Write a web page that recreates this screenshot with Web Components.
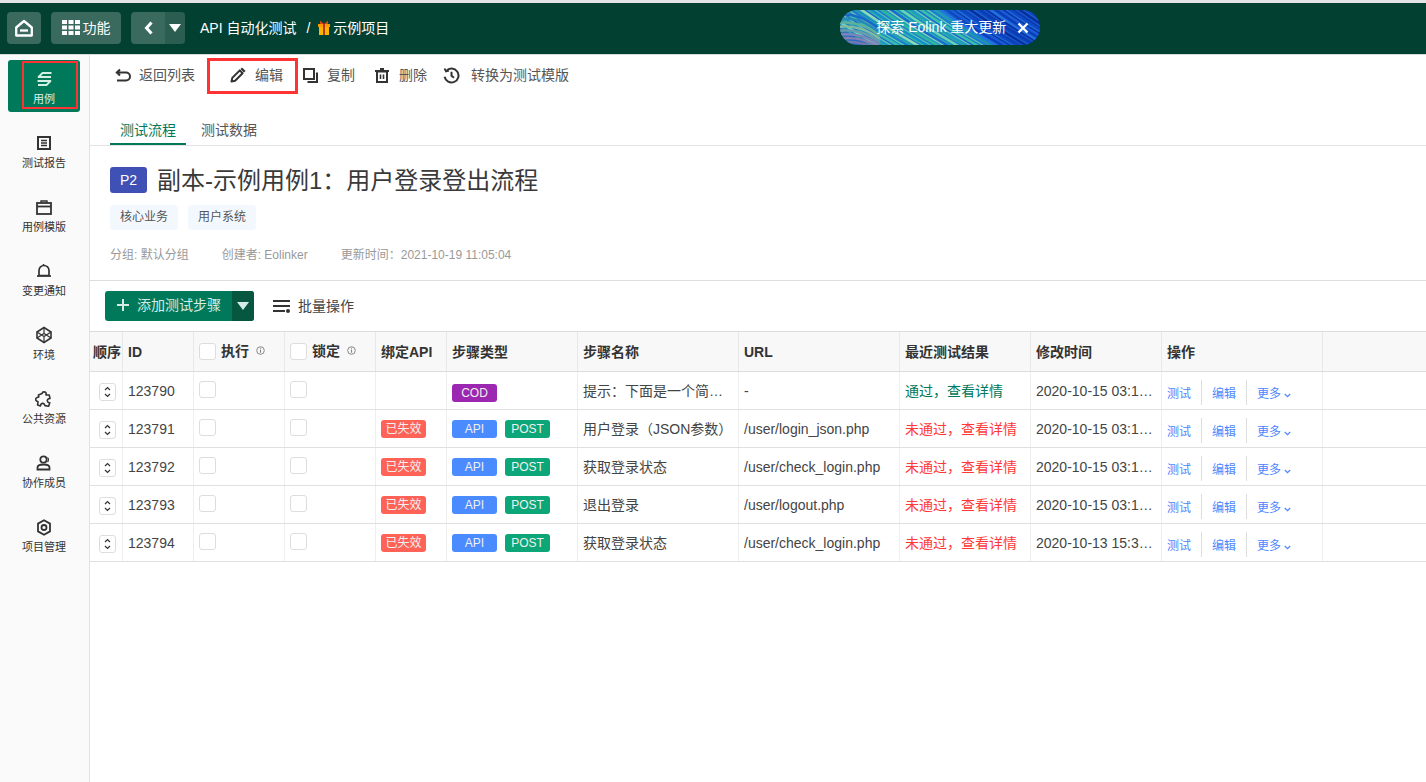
<!DOCTYPE html>
<html lang="zh-CN"><head><meta charset="utf-8"><title>Eolink</title>
<style>
html,body{margin:0;height:100%;background:#fff}
body{font:14px/20px "Liberation Sans","Noto Sans CJK SC",sans-serif;color:#333}
</style></head>
<body>
<app-shell>
  <app-header slot="header"></app-header>
  <side-nav slot="nav"></side-nav>
  <case-toolbar></case-toolbar>
  <case-tabs></case-tabs>
  <case-summary></case-summary>
  <step-actions></step-actions>
  <step-table></step-table>
</app-shell>
<script>
const ic=(w,h,body,extra='')=>`<svg width="${w}" height="${h}" viewBox="0 0 ${w} ${h}" fill="none" stroke="currentColor" stroke-width="2" ${extra}>${body}</svg>`;
function def(name,css,html,init){
  customElements.define(name,class extends HTMLElement{
    connectedCallback(){
      if(this.shadowRoot)return;
      const r=this.attachShadow({mode:'open'});
      r.innerHTML=`<style>${css}</style>`+(typeof html==='function'?html(this):html);
      if(init)init(r,this);
    }
  });
}
def('app-shell',`
:host{display:grid;grid-template-columns:90px 1fr;grid-template-rows:55px 1fr;height:782px;overflow:hidden;width:1426px}
.h{grid-column:1/3}
.n{min-height:0}
main{min-width:0;display:flex;flex-direction:column}
`,`<div class="h"><slot name="header"></slot></div><div class="n"><slot name="nav"></slot></div><main><slot></slot></main>`);

def('hd-btn',`
:host{display:flex;align-items:center;justify-content:center;gap:3px;height:32px;background:#3a6a5e;border-radius:4px;color:#fff;font-size:14px;line-height:32px}
`,`<slot></slot>`);

def('promo-pill',`
:host{display:flex;align-items:center;position:relative;width:200px;height:35px;border-radius:18px;overflow:hidden;color:#fff;font-size:14px;background:linear-gradient(90deg,#3d78b4 0,#1560c8 14%,#22a0b0 34%,#1878c8 54%,#0c44b8 72%,#0a36a4 100%)}
svg.bg{position:absolute;left:0;top:0}
span{position:relative;margin-left:36px;width:130px;white-space:nowrap;line-height:35px}
svg.x{position:relative;margin-left:11px}
`,()=>{
  let s='';
  const mid=['#3cc0a8','#1c9cc0','#6ed4b0','#1a6ad0','#2fb8a0','#1290c8','#8fdcb8','#1e7ed0'];
  const rt=['#0c3cb4','#1a5cd8','#08309c','#2470e0','#0e48c4'];
  for(let i=0;i<70;i++){
    const x=i*3.3-30;const c=x<95?mid[i*5%8]:rt[i%5];
    s+=`<path d="M${x} -4 C ${x+14} 6, ${x+34} 20, ${x+70} 40" stroke="${c}" stroke-width="${1.4+(i%3)*.7}" opacity="${.7+(i%3)*.14}" fill="none"/>`;
  }
  const lf=['#1a68c8','#2a88b8','#5fb09c','#84b8a0','#6a9cb0','#7c84bc','#8a80b4','#7078b0'];
  for(let i=0;i<8;i++){
    s+=`<path d="M-2 ${5+i*4} C 10 ${3+i*4}, 26 ${7+i*3.6}, 40 ${20+i*3}" stroke="${lf[i]}" stroke-width="2.400" fill="none"/>`;
  }
  return `<svg class="bg" width="200" height="35" viewBox="0 0 200 35">${s}</svg><span>探索 Eolink 重大更新</span>${ic(12,12,'<path d="M1.500 1.500l9 9M10.500 1.500l-9 9" stroke-width="2.400"/>','class="x"')}`;
});

def('app-header',`
:host{display:flex;align-items:center;box-sizing:border-box;height:55px;background:#024032;border-top:3px solid #e4e4e4;border-bottom:1px solid #d8d8d8;color:#fff;padding:0 0 2px 7px;position:relative}
.home{width:34px}.fn{width:70px;margin-left:10px}
.back{width:34px;margin-left:10px;border-radius:4px 0 0 4px}
.drop{width:20px;background:#2b5d50;border-radius:0 4px 4px 0}
.crumb{margin-left:15px;display:flex;align-items:center;white-space:nowrap;font-size:14px}
.sep{margin:0 8px 0 10px}
.gift{margin-right:3px}
promo-pill{margin-left:451px}
`,`
<hd-btn class="home">${ic(20,18,'<path d="M10 2L2.200 8.500V16.500h15.600V8.500z" stroke-width="2.300" stroke-linejoin="round"/><path d="M6 11.500h8" stroke-width="2.300"/>')}</hd-btn>
<hd-btn class="fn"><svg width="18" height="15" viewBox="0 0 18 15" fill="#fff"><rect width="5" height="4"/><rect x="6.500" width="5" height="4"/><rect x="13" width="5" height="4"/><rect y="5.500" width="5" height="4"/><rect x="6.500" y="5.500" width="5" height="4"/><rect x="13" y="5.500" width="5" height="4"/><rect y="11" width="5" height="4"/><rect x="6.500" y="11" width="5" height="4"/><rect x="13" y="11" width="5" height="4"/></svg>功能</hd-btn>
<hd-btn class="back">${ic(9,14,'<path d="M7.500 1.500L2.500 7l5 5.500" stroke-width="3"/>')}</hd-btn>
<hd-btn class="drop"><svg width="12" height="8" viewBox="0 0 12 8" fill="#fff"><path d="M0 0h12L6 8z"/></svg></hd-btn>
<div class="crumb">API 自动化测试<span class="sep">/</span><svg class="gift" width="12" height="15" viewBox="0 0 12 15"><path d="M0 4h12v3H0z" fill="#ff9800"/><path d="M1 7h10v8H1z" fill="#ffb300"/><path d="M5 4h2v11H5z" fill="#b23a20"/><path d="M2 .5l4 3.500 4-3.500V4H2z" fill="#d84315"/></svg>示例项目</div>
<promo-pill></promo-pill>
`);

def('nav-item',`
:host{display:flex;flex-direction:column;align-items:center;width:72px;height:52px;margin:0 0 12px 8px;border-radius:3px;color:#333;position:relative;box-sizing:border-box;padding-top:10px}
:host([active]){background:#00795a;color:#d8efe6}
.i{height:18px;display:flex;align-items:center;justify-content:center;color:#333}
:host([active]) .i{color:#d4eee4}
.t{font-size:11px;line-height:14px;margin-top:4px;white-space:nowrap}
.mark{display:none;position:absolute;left:14px;right:2px;top:1px;bottom:3px;border:2px solid #f33;pointer-events:none}
:host([active]) .mark{display:block}
`,h=>`<div class="i"><slot></slot></div><div class="t">${h.getAttribute('label')}</div><div class="mark"></div>`);

def('side-nav',`
:host{display:block;box-sizing:border-box;width:90px;height:100%;background:#fafafa;border-right:1px solid #e2e2e2;padding-top:5px}
`,`
<nav-item active label="用例">${ic(17,16,'<path d="M15.500 2H6.500L2.500 6H15" stroke-width="1.800" stroke-linejoin="round"/><path d="M1.500 10H14.500L10.500 14H2" stroke-width="1.800" stroke-linejoin="round"/>')}</nav-item>
<nav-item label="测试报告">${ic(14,14,'<rect x="1" y="1" width="12" height="12" stroke-width="2"/><path d="M4 4.500h6M4 7h6M4 9.500h6" stroke-width="1.300"/>')}</nav-item>
<nav-item label="用例模版">${ic(16,15,'<rect x="1" y="3" width="14" height="11" stroke-width="1.800"/><path d="M1 6.500h14" stroke-width="1.800"/><path d="M5 3V1h6v2" stroke-width="1.400"/>')}</nav-item>
<nav-item label="变更通知">${ic(16,16,'<path d="M3 12.500V7.500a5 5 0 0 1 10 0v5z" stroke-width="1.700"/><path d="M1 13h14" stroke-width="1.700"/><path d="M7.500 1v2" stroke-width="1.500"/>')}</nav-item>
<nav-item label="环境">${ic(18,18,'<path d="M9 1.500l7 4.500v6l-7 4.500L2 12V6z" stroke-width="1.600"/><path d="M2 6l7 4.500L16 6M2 12l7-4.500 7 4.500M9 1.500v6M9 10.500v6" stroke-width="1.200"/>')}</nav-item>
<nav-item label="公共资源">${ic(18,18,'<path d="M7 3.500a2.200 2.200 0 0 1 4.200-.2L11 5h3.200l.8 3.400-1.400.4a2 2 0 0 0 .2 3.800l1 .2-1.200 3.400-3.600-.6-.6-1.200a2 2 0 0 0-3.600.2L5.400 16 2.600 15l.4-3.200-1.400-.8a2 2 0 0 1 .6-3.600L3.800 7 3.400 5z" stroke-width="1.600" stroke-linejoin="round"/>')}</nav-item>
<nav-item label="协作成员">${ic(16,16,'<circle cx="7.500" cy="4.500" r="3.200" stroke-width="1.800"/><path d="M1.500 14.500v-2c0-2 2-3 6-3s6 1 6 3v2z" stroke-width="1.800"/><path d="M11.500 2.500a3 3 0 0 1 0 4.500" stroke-width="1.100"/>')}</nav-item>
<nav-item label="项目管理">${ic(16,17,'<path d="M8 1.200l6 3.400v7.800l-6 3.400-6-3.400V4.600z" stroke-width="1.800"/><circle cx="8" cy="8.500" r="2.500" stroke-width="1.800"/>')}</nav-item>
`);

def('tool-action',`
:host{display:flex;align-items:center;white-space:nowrap;font-size:14px;line-height:20px;color:#555;position:relative}
.i{display:flex;align-items:center;justify-content:center;color:#333;margin-right:var(--g,8px)}
`,`<span class="i"><slot name="i"></slot></span><slot></slot>`);

def('case-toolbar',`
:host{display:flex;align-items:center;box-sizing:border-box;height:42px;padding:0 0 2px 25px}
.edit{position:relative;margin-left:35px;--g:9px}
.mark{position:absolute;left:-23px;top:-7px;width:85px;height:30px;border:3px solid #f33;box-sizing:content-box;pointer-events:none}
.copy{margin-left:20px;--g:9px}.del{margin-left:20px;--g:10px}.his{margin-left:16px;--g:11px}
`,`
<tool-action>${ic(16,14,'<path d="M5 1.500L1.800 4.500 5 7.500M2 4.500h9a3.500 3.500 0 0 1 0 8H2" stroke-width="2"/>','slot="i"')}返回列表</tool-action>
<tool-action class="edit">${ic(16,16,'<path d="M1.500 14.500l.8-3.600 7.500-7.500 2.800 2.800-7.500 7.500z" stroke-width="2" stroke-linejoin="round"/><path d="M11.300 1.200l3.500 3.500" stroke-width="2.200"/>','slot="i"')}编辑<div class="mark"></div></tool-action>
<tool-action class="copy">${ic(15,15,'<rect x="1" y="1" width="10" height="10" stroke-width="2"/><path d="M4.500 14h9.500V4.500" stroke-width="2"/>','slot="i"')}复制</tool-action>
<tool-action class="del">${ic(14,15,'<path d="M0 3h14M5 1h4" stroke-width="2"/><rect x="2" y="3.500" width="10" height="10.500" stroke-width="2"/><path d="M5.500 6.500v4.500M8.500 6.500v4.500" stroke-width="1.600"/>','slot="i"')}删除</tool-action>
<tool-action class="his">${ic(17,17,'<path d="M3.300 3.800a7 7 0 1 1-1.700 6" stroke-width="2"/><path d="M1.500 1.500l1.500 3 3-.8" stroke-width="1.700"/><path d="M8.500 4.800v4l2.500 2" stroke-width="2"/>','slot="i"')}转换为测试模版</tool-action>
`);

def('case-tabs',`
:host{display:flex;height:49px;box-sizing:border-box;padding:23px 0 0 20px;border-bottom:1px solid #e2e2e2}
div{width:76px;height:25px;box-sizing:border-box;text-align:center;line-height:20px;font-size:14px;color:#555;margin-right:5px}
.on{color:#00795a;border-bottom:2px solid #00795a}
`,`<div class="on">测试流程</div><div>测试数据</div>`);

def('case-summary',`
:host{display:block;box-sizing:border-box;height:135px;padding:21px 0 0 20px;border-bottom:1px solid #ddd}
.t{display:flex;align-items:center;height:26px}
.p{width:37px;height:26px;line-height:26px;border-radius:3px;background:#3f51b5;color:#fff;text-align:center;font-size:14px;margin-right:10px}
h1{margin:2px 0 0;font-weight:400;font-size:24px;line-height:28px;color:#3a3a3a;white-space:nowrap}
.tags{display:flex;gap:10px;margin-top:12px}
.tags span{height:25px;line-height:25px;padding:0 10px;background:#f3f8ff;border-radius:3px;font-size:12px;color:#555}
.m{display:flex;gap:33px;margin-top:15px;font-size:12px;line-height:20px;color:#999;white-space:nowrap}
`,`
<div class="t"><div class="p">P2</div><h1>副本-示例用例1：用户登录登出流程</h1></div>
<div class="tags"><span>核心业务</span><span>用户系统</span></div>
<div class="m"><span>分组: 默认分组</span><span>创建者: Eolinker</span><span>更新时间：2021-10-19 11:05:04</span></div>
`);

def('step-actions',`
:host{display:flex;align-items:center;height:50px;box-sizing:border-box;padding:0 0 0 15px}
.b{display:flex;height:30px;width:149px;border-radius:3px;overflow:hidden;color:#d4ece4;background:#00795a}
.a{width:127px;display:flex;align-items:center;padding:0 0 2px 12px;box-sizing:border-box;font-size:14px;white-space:nowrap}
.a svg{margin-right:8px}
.d{width:22px;background:#07563f;display:flex;align-items:center;justify-content:center}
.bat{display:flex;align-items:center;margin-left:19px;font-size:14px;color:#444}
.bat svg{margin-right:8px;color:#333}
`,`
<div class="b"><div class="a">${ic(12,12,'<path d="M6 0v12M0 6h12" stroke-width="2"/>')}添加测试步骤</div><div class="d"><svg width="12" height="8" viewBox="0 0 12 8" fill="#d4ece4"><path d="M0 0h12L6 8z"/></svg></div></div>
<div class="bat"><svg width="17" height="13" viewBox="0 0 17 13" fill="currentColor"><rect width="17" height="2"/><rect y="5" width="17" height="2"/><rect y="10" width="12" height="2"/><circle cx="15" cy="11" r="2"/></svg>批量操作</div>
`);

def('check-box',`
:host{display:block;width:17px;height:17px;box-sizing:border-box;border:1px solid #ddd;border-radius:3px;background:#fff;flex:none}
`,``);

def('step-tag',`
:host{display:inline-block;width:45px;height:18px;line-height:18px;text-align:center;border-radius:3px;color:#f0f0f0;font-size:12px;background:var(--c)}
`,`<slot></slot>`);

def('info-dot',`
:host{display:inline-flex;color:#888}
`,ic(9,9,'<circle cx="4.500" cy="4.500" r="3.800" stroke-width="1"/><path d="M4.500 3.500v3.200M4.500 1.800v1" stroke-width="1.100"/>'));

def('step-table',`
:host{display:block;font-size:14px;color:#444;border-top:1px solid #ddd}
.r{display:grid;grid-template-columns:33px 71px 91px 91px 71px 131px 161px 161px 131px 131px 161px 1fr;height:38px;border-bottom:1px solid #e0e0e0;box-sizing:border-box}
.h{height:40px;background:#f8f8f8;border-bottom:1px solid #ddd;font-weight:700;color:#333}
.c{border-right:1px solid #eee;padding:0 5px;display:flex;align-items:center;white-space:nowrap;overflow:hidden;min-width:0;box-sizing:border-box}
.h .c{border-right-color:#e8e8e8}
.c.last{border-right:0}
.c.o{padding:0 0 0 3px}
.c.tog{padding-left:9px}
.e{overflow:hidden;text-overflow:ellipsis;white-space:nowrap;display:block;width:100%}
.h check-box{margin-right:5px}
.h .lbl{margin-top:-1px}
.h info-dot{margin-left:7px;margin-top:-3px}
.ck{align-items:flex-start;padding-top:9px}
.tg{gap:8px}
step-tag{margin-top:1px}
step-tag.cod{margin-top:5px}
.step{width:17px;height:18px;box-sizing:border-box;border:1px solid #ddd;border-radius:3px;display:flex;align-items:center;justify-content:center;margin-top:3px;color:#333}
.ok{color:#00795a}.bad{color:#ff3838}
.ops{font-size:12px;color:#4d86ff;padding-top:7px}
.ops span{display:block;white-space:nowrap}
.ops i{display:block;width:1px;height:25px;background:#ddd;margin:-3px 10px 0}
.ops svg{margin-left:3px}
`,()=>{
  const tag=(t,c,k='')=>`<step-tag class="${k}" style="--c:${c}">${t}</step-tag>`;
  const rows=[
   ['123790','','COD','提示：下面是一个简…','-',1,'2020-10-15 03:1…'],
   ['123791',1,'API','用户登录（JSON参数）','/user/login_json.php',0,'2020-10-15 03:1…'],
   ['123792',1,'API','获取登录状态','/user/check_login.php',0,'2020-10-15 03:1…'],
   ['123793',1,'API','退出登录','/user/logout.php',0,'2020-10-15 03:1…'],
   ['123794',1,'API','获取登录状态','/user/check_login.php',0,'2020-10-13 15:3…'],
  ];
  let out=`<div class="r h"><div class="c o">顺序</div><div class="c">ID</div><div class="c"><check-box></check-box><span class="lbl">执行</span><info-dot></info-dot></div><div class="c"><check-box></check-box><span class="lbl">锁定</span><info-dot></info-dot></div><div class="c">绑定API</div><div class="c">步骤类型</div><div class="c">步骤名称</div><div class="c">URL</div><div class="c">最近测试结果</div><div class="c">修改时间</div><div class="c">操作</div><div class="c last"></div></div>`;
  for(const r of rows){
    out+=`<div class="r"><div class="c tog"><div class="step"><svg width="7" height="12" viewBox="0 0 7 12" fill="none" stroke="currentColor" stroke-width="1.200"><path d="M1 4l2.500-2.500L6 4M1 8l2.500 2.500L6 8"/></svg></div></div>
    <div class="c">${r[0]}</div><div class="c ck"><check-box></check-box></div><div class="c ck"><check-box></check-box></div>
    <div class="c">${r[1]?tag('已失效','#ff6358'):''}</div>
    <div class="c tg">${r[2]==='COD'?tag('COD','#9c27b0','cod'):tag('API','#4a8bff')+tag('POST','#0ca678')}</div>
    <div class="c"><span class="e">${r[3]}</span></div><div class="c"><span class="e">${r[4]}</span></div>
    <div class="c ${r[5]?'ok':'bad'}">${r[5]?'通过，查看详情':'未通过，查看详情'}</div>
    <div class="c"><span class="e">${r[6]}</span></div>
    <div class="c ops"><span>测试</span><i></i><span>编辑</span><i></i><span>更多<svg width="7" height="5" viewBox="0 0 7 5" fill="none" stroke="currentColor" stroke-width="1.200"><path d="M.8 1l2.700 2.700L6.200 1"/></svg></span></div>
    <div class="c last"></div></div>`;
  }
  return out;
});
</script>
</body></html>
